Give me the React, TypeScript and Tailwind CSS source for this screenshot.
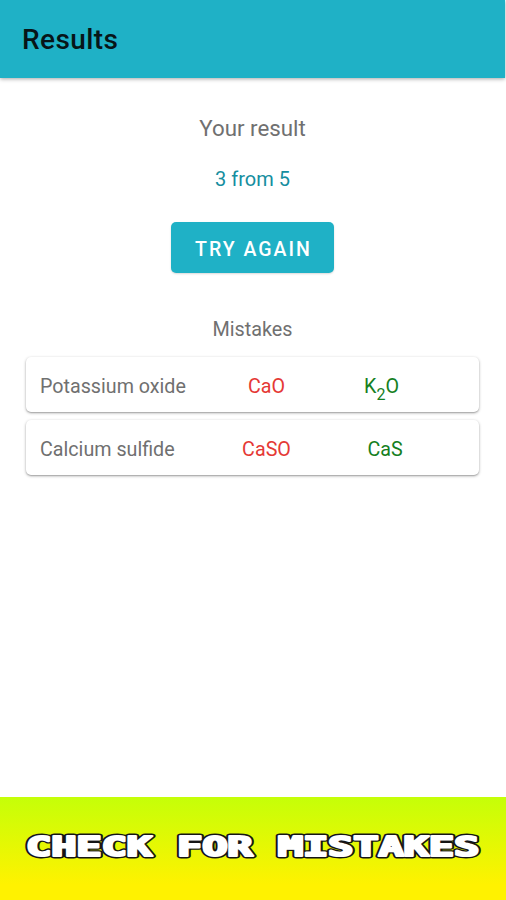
interface Mistake {
    name: string;
    answer: string;
    correct: React.ReactNode;
}

const mistakes: Mistake[] = [
    { name: "Potassium oxide", answer: "CaO", correct: <span className="mr-[7px]">K<span className="relative top-[7px] text-[16px]">2</span>O</span> },
    { name: "Calcium sulfide", answer: "CaSO", correct: "CaS" },
];

function MistakeRow({ name, answer, correct }: Mistake) {
    return (
        <div className="flex h-[55px] items-center rounded-[5px] bg-white pt-[4px] text-[19.7px] shadow-[0_1px_3px_rgba(0,0,0,0.34),0_1px_1px_rgba(0,0,0,0.12)]">
            <div className="w-[181px] pl-[14px] text-[#707070]">{name}</div>
            <div className="w-[119px] text-center text-[#e53935]">{answer}</div>
            <div className="w-[118px] text-center leading-none text-[#16801f]">{correct}</div>
        </div>
    );
}

function Banner() {
    const text = "CHECK FOR MISTAKES";

    return (
        <footer className="h-[103px] bg-linear-to-b/srgb from-[#c5ff08] to-[#fff200] to-85%">
            <svg width="506" height="103" viewBox="0 0 506 103" role="img" aria-label={text}>
                <g transform="translate(26 58.5) scale(1.625 1)" fontFamily="'DejaVu Sans Mono', monospace" fontWeight="700" fontSize="26" strokeLinejoin="round">
                    {/* dark outline first, then a thinner white stroke to fatten the letters */}
                    <text textLength="279" fill="#151515" stroke="#151515" strokeWidth="4.8">{text}</text>
                    <text textLength="279" fill="#ffffff" stroke="#ffffff" strokeWidth="2.2">{text}</text>
                </g>
            </svg>
        </footer>
    );
}

export default function App() {
    return (
        <div className="flex h-[900px] w-[506px] flex-col overflow-hidden bg-white font-['Roboto',sans-serif]">
            <header className="mr-px flex h-[78px] items-center bg-[#1fb1c6] pl-[22px] pt-[2px] shadow-[0_1px_4px_rgba(0,0,0,0.35)]">
                <h1 className="text-[28px] font-medium tracking-[0.4px] text-[#071518]">Results</h1>
            </header>

            <main className="flex flex-1 flex-col items-center pr-px">
                <p className="mt-[36px] text-[22.3px] leading-[28px] text-[#707070]">Your result</p>
                <p className="mt-[24px] text-[20px] leading-[26px] text-[#168ea0]">3 from 5</p>
                <button className="mt-[30px] h-[51px] w-[163px] rounded-[5px] bg-[#1fb1c6] pl-[2px] pt-[4px] text-[19.5px] font-medium tracking-[2px] text-white shadow-[0_1px_2px_rgba(0,0,0,0.15)]">
                    TRY AGAIN
                </button>

                <h2 className="mt-[45px] text-[19.8px] leading-[24px] text-[#707070]">Mistakes</h2>
                <div className="mt-[15px] flex w-[453px] flex-col gap-[8px]">
                    {mistakes.map((mistake) => (
                        <MistakeRow key={mistake.name} {...mistake} />
                    ))}
                </div>
            </main>

            <Banner />
        </div>
    );
}
